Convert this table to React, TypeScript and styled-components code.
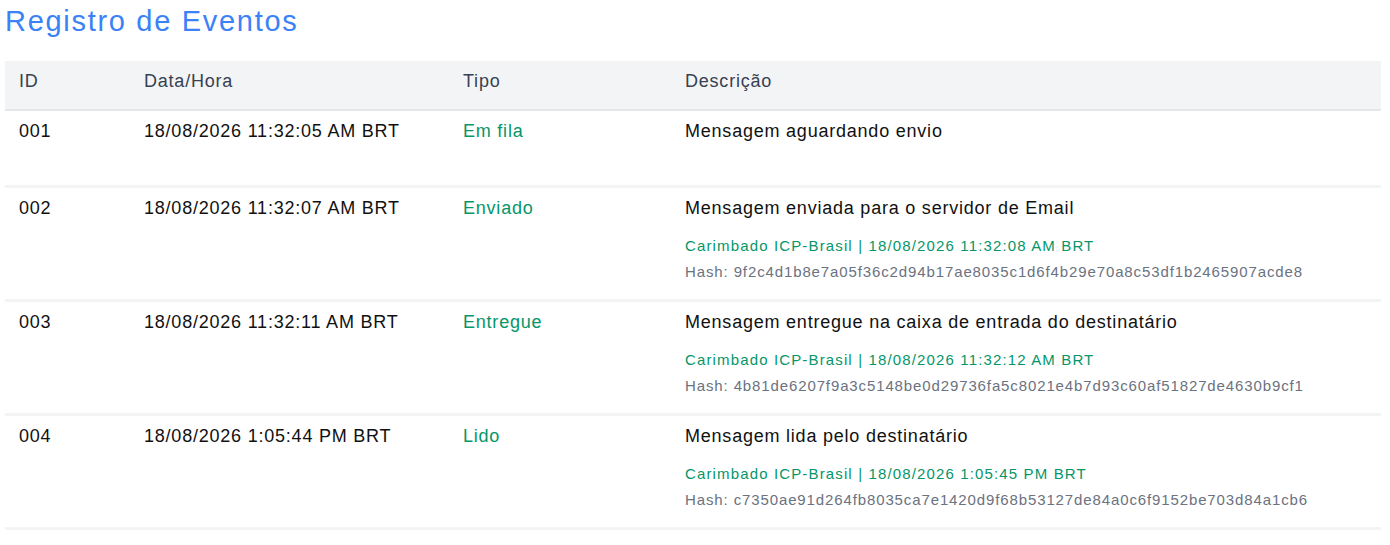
import React from "react";
import styled, { createGlobalStyle } from "styled-components";

const Global = createGlobalStyle`
  html, body { margin: 0; padding: 0; background: #ffffff; }
  body { font-family: "Liberation Sans", Arial, Helvetica, sans-serif; }
`;

const Page = styled.div`
  padding: 3px 9px 0 5px;
`;

const Title = styled.h1`
  margin: 0 0 22px 0;
  font-size: 29px;
  line-height: 36px;
  font-weight: 400;
  letter-spacing: 1.7px;
  color: #3b82f6;
`;

const Table = styled.div`
  display: flex;
  flex-direction: column;
`;

const cols = "125px 319px 222px 1fr";

const HeaderRow = styled.div`
  display: grid;
  grid-template-columns: ${cols};
  background: #f3f4f6;
  border-bottom: 2px solid #e5e7eb;
`;

const HeaderCell = styled.div`
  padding: 8px 14px 16px 14px;
  font-size: 18px;
  line-height: 24px;
  letter-spacing: 0.78px;
  color: #374151;
`;

const Row = styled.div`
  display: grid;
  grid-template-columns: ${cols};
  min-height: 74px;
  border-bottom: 3px solid #f3f4f6;
`;

const Cell = styled.div<{ $tone?: "green" }>`
  padding: 8px 14px 14px 14px;
  font-size: 18px;
  line-height: 24px;
  letter-spacing: 0.78px;
  color: ${(p) => (p.$tone === "green" ? "#059669" : "#111111")};
`;

const Stamp = styled.div`
  margin-top: 13px;
  display: flex;
  flex-direction: column;
`;

const StampLine = styled.div<{ $tone: "green" | "gray" }>`
  font-size: 15px;
  line-height: 26px;
  letter-spacing: ${(p) => (p.$tone === "green" ? "1.14px" : "0.88px")};
  color: ${(p) => (p.$tone === "green" ? "#059669" : "#6b7280")};
  white-space: nowrap;
`;

type Event = {
  id: string;
  date: string;
  type: string;
  desc: string;
  stamp?: string;
  hash?: string;
};

const events: Event[] = [
  { id: "001", date: "18/08/2026 11:32:05 AM BRT", type: "Em fila", desc: "Mensagem aguardando envio" },
  {
    id: "002",
    date: "18/08/2026 11:32:07 AM BRT",
    type: "Enviado",
    desc: "Mensagem enviada para o servidor de Email",
    stamp: "18/08/2026 11:32:08 AM BRT",
    hash: "9f2c4d1b8e7a05f36c2d94b17ae8035c1d6f4b29e70a8c53df1b2465907acde8",
  },
  {
    id: "003",
    date: "18/08/2026 11:32:11 AM BRT",
    type: "Entregue",
    desc: "Mensagem entregue na caixa de entrada do destinatário",
    stamp: "18/08/2026 11:32:12 AM BRT",
    hash: "4b81de6207f9a3c5148be0d29736fa5c8021e4b7d93c60af51827de4630b9cf1",
  },
  {
    id: "004",
    date: "18/08/2026 1:05:44 PM BRT",
    type: "Lido",
    desc: "Mensagem lida pelo destinatário",
    stamp: "18/08/2026 1:05:45 PM BRT",
    hash: "c7350ae91d264fb8035ca7e1420d9f68b53127de84a0c6f9152be703d84a1cb6",
  },
];

export default function App() {
  return (
    <Page>
      <Global />
      <Title>Registro de Eventos</Title>
      <Table>
        <HeaderRow>
          <HeaderCell>ID</HeaderCell>
          <HeaderCell>Data/Hora</HeaderCell>
          <HeaderCell>Tipo</HeaderCell>
          <HeaderCell>Descrição</HeaderCell>
        </HeaderRow>
        {events.map((e) => (
          <Row key={e.id}>
            <Cell>{e.id}</Cell>
            <Cell>{e.date}</Cell>
            <Cell $tone="green">{e.type}</Cell>
            <Cell>
              {e.desc}
              {e.stamp && (
                <Stamp>
                  <StampLine $tone="green">Carimbado ICP-Brasil | {e.stamp}</StampLine>
                  <StampLine $tone="gray">Hash: {e.hash}</StampLine>
                </Stamp>
              )}
            </Cell>
          </Row>
        ))}
      </Table>
    </Page>
  );
}
